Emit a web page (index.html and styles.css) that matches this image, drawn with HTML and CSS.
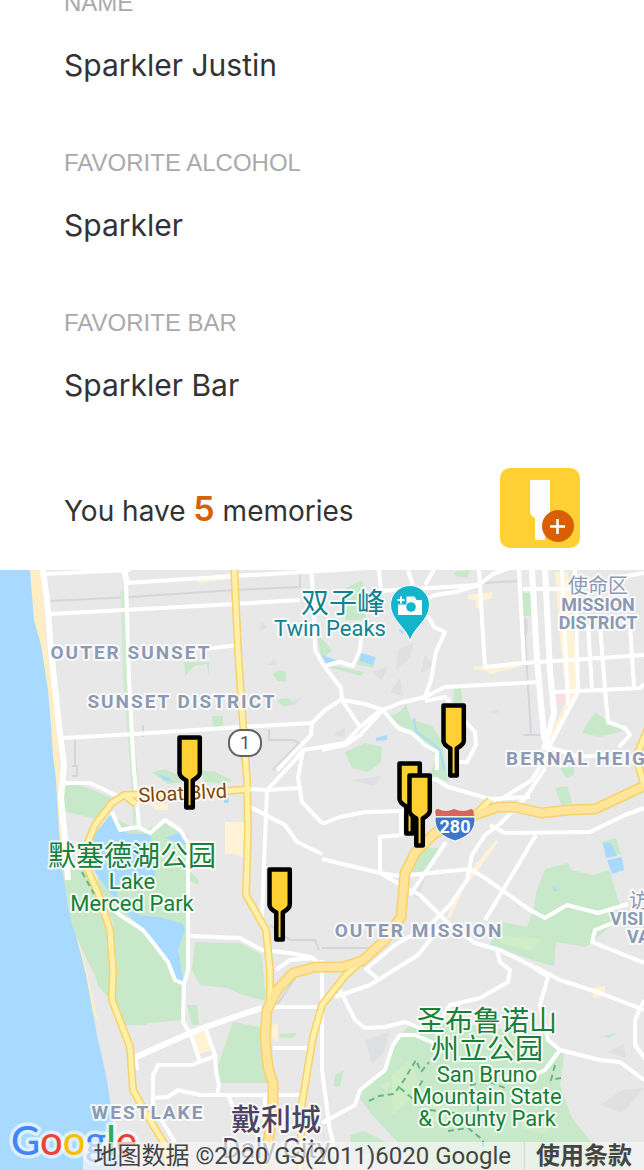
FILE: index.html
```html
<!DOCTYPE html>
<html lang="en">
<head>
<meta charset="utf-8">
<meta name="viewport" content="width=device-width, initial-scale=1">
<title>Profile</title>
<link rel="stylesheet" href="styles.css">
</head>
<body>
<main class="page">
  <section class="profile">
    <dl class="fields">
      <div class="field"><dt class="field-label">NAME</dt><dd class="field-value">Sparkler Justin</dd></div>
      <div class="field"><dt class="field-label">FAVORITE ALCOHOL</dt><dd class="field-value">Sparkler</dd></div>
      <div class="field"><dt class="field-label">FAVORITE BAR</dt><dd class="field-value">Sparkler Bar</dd></div>
    </dl>
    <div class="memories">
      <p class="memories-text">You have <strong class="memories-count">5</strong> memories</p>
      <button class="add-button" type="button" aria-label="Add memory">
        <svg viewBox="0 0 80 80" aria-hidden="true">
          <path d="M31 12H49Q50 12 50 13V44Q50 47 45 50V71Q45 72 44 72H36Q35 72 35 71V50Q30 47 30 44V13Q30 12 31 12Z" fill="#fcfcfc"/>
          <circle cx="58" cy="58" r="16" fill="#d95f02"/>
          <path d="M50 58.500H65M57.500 51V66" stroke="#fff" stroke-width="2.600"/>
        </svg>
      </button>
    </div>
  </section>

  <section class="map" aria-label="Map of memories">
    <svg class="map-canvas" viewBox="0 570 644 600" preserveAspectRatio="xMidYMid slice">
      <defs>
        <g id="bottle">
          <path d="M2.500 2.500H22.800V38Q22.500 41.500 15.800 45.500V72.500H9.300V45.500Q2.500 41.500 2.500 38Z" fill="#ffd034" stroke="#000" stroke-width="4.500" stroke-linejoin="round"/>
        </g>
      </defs>

      <rect class="land" y="570" width="644" height="600"/>

      <g class="shade">
        <path d="M398 650l16-8-4 16-14 12zM372 672l16-6-6 14zM425 655l8 10-12 8zM390 692l10-14 3 18zM333 735l12-8v10zM352 780l30-4-8 10zM490 712l8-3v4zM365 1040l24-8-5 20-12 12zM608 1052l16-8 2 14zM600 1105l22-15 22-2-22 25zM410 892l8-14 8-2-8 24z"/>
        <path d="M258 630l4-8 5 6zM268 665l6-6 3 6zM284 705l20-9-10 10z"/>
      </g>

      <path class="sand" d="M28 570H41L46 640 54 700 60 770 63 860 72 915 86 968 98 1020 90 1010 55 880 44 700Z"/>
      <path class="water" d="M0 570H30L34 620 41 645 48 690 51 725 53 755 56 780 59 830 63 870 68 905 76 935 86 975 97 1035 107 1080 113 1120 120 1170H0Z"/>

      <g class="park">
        <path d="M60 787L77 784 110 797 114 804 97 820 88 817 66 812Z"/>
        <path d="M62 870H85L98 893 112 928 114 970 108 997 98 986 95 975 82 950 72 925Z"/>
        <path d="M95 838L110 815 140 832 165 822 180 830 188 838V870L199 880 198 885 188 880V965L184 985V1020L147 1023 146 1025 124 1025 114 1000 114 925 98 885Z"/>
        <path d="M195 942L225 943 240 943 262 955 266 1001 240 994 228 988 200 985 192 970Z"/>
        <path d="M187 1005H197L199 1025H192Z"/>
        <path d="M233 1022L260 1027 264 1060 268 1083H220L218 1065Z"/>
        <path d="M151 772L165 769 180 776 182 782 168 784zM200 770L215 772 232 780 225 784 205 782Z"/>
        <path d="M184 662H209V676L207 664 194 666 185 676ZM212 716H223V727H213ZM273 674l6-4 7 2v10l-9-1zM276 700l12-2 6 5-10 4zM240 757h3v12z"/>
        <path d="M346 588L362 580 366 620 345 620ZM316 632L332 650 322 660ZM358 653L376 657 373 668 354 664ZM322 663l42 9-3 4-39-11zM345 752L365 743 382 747 381 762 368 772 352 768ZM454 688H461L463 706H453ZM521 593H531L531 616H522ZM453 572l17-2-3 8-11-2z"/>
        <path d="M388 716L400 712 406 704 411 719 432 726 442 742 448 782 430 775 436 757 422 741 408 731Z"/>
        <path d="M582 733L590 719 596 713 610 722 625 724 620 732 600 737Z"/>
        <path d="M560 768l14-1v8l-8 3zM555 788L567 786 572 803 562 806ZM420 848L439 848 425 872 411 872ZM601 842L616 838 621 854 609 856Z"/>
        <path d="M545 869L568 863 571 870 593 875 609 870 620 905 612 925 586 947 556 942 554 966 535 961 489 945 503 922 527 927 533 912 536 893 541 880Z"/>
        <path d="M397 1038L410 1025 450 1022 545 1035 564 1055 560 1085 572 1118 594 1145 625 1170H430L400 1145 372 1115 357 1095 385 1070Z"/>
        <path d="M350 1135l14-4 28 14 10 12-50-5zM335 1075l9-5-4 16-6 1zM602 1036l15-3-8 5zM280 1034l17-1-5 5-13-1z"/>
      </g>
      <g class="park-light">
        <path d="M500 935l40 4-8 12-32-8zM392 1075l18-15 12 30-30 25zM430 1100l30 10-5 18-25-8zM520 1110l30 12-5 12-22-5zM380 1085l10-4-3 12z"/>
      </g>

      <g class="water">
        <path d="M110 815L117 828 130 834 150 834 156 855 155 876 120 880 116 900 140 915 160 917 183 924 185 930 178 950 184 984 174 978 166 958 143 930 122 908 105 886 88 862 90 840ZM165 838L180 832 188 836V846Z"/>
        <path d="M158 774l12 4 2 4-8-2zM224 798h5v5h-5zM322 655L336 660 326 664ZM361 653L375 657 373 665 360 661ZM376 738L387 735V740L376 741ZM398 629l6 2-1 4zM603 843L611 843 617 856 606 858ZM607 860L622 857 624 870 612 874ZM552 885l6 5-3 2zM598 881l4 2z"/>
        <path class="stream" d="M414 718L416 732 430 741 440 750 444 770"/>
      </g>

      <g class="shop">
        <path d="M225 822H244V858L234 854 225 854ZM193 1033L207 1031 212 1050 199 1054ZM150 804h18v6h-12zM468 595l24-3v6l-10 3v8l-6-1v-8l-8-1zM473 667l45-6v6l-27 7-5-3-12-2zM197 578l40-6v6l-38 5zM593 988l12-2v10l-12 2zM272 1025l6-2v18l-6-2z"/>
        <path d="M555 572H568L573 630 580 690 552 745 550 735 567 700 560 640Z"/>
        <path d="M496 840L498 842 476 873 466 885 450 918 447 918 456 896 475 865Z"/>
      </g>
      <path class="hospital" d="M556 693H566V702L557 703Z"/>

      <g class="rail">
        <path d="M50 601L130 597 235 590 300 587V573M75 740V765M72 766h5v10h-5M273 770L300 742M269 729v11h25l5 3M482 583L520 581M524 620l3 50 4 65M523 735h17M322 948H378M143 725v12M270 925l20 15h25l4 10"/>
        <path d="M525 618q4 8-1 22M277 1005l20-30"/>
      </g>

      <g class="road-green"><path d="M124 590L127 690 134 770 137 828"/></g>

      <g class="road road-wide">
        <path d="M43 570L47 600 51 650 59 725 64 765 61 798 65 840 68 880"/>
        <path d="M532 570L537 660 544 737 549 750M545 570L550 670 554 713 544 750"/>
        <path d="M124 570L127 583"/>
      </g>
      <g class="road">
        <path d="M45 574L130 570M126 583L235 576 320 571 400 566M126 583L129 680 134 770 137 800 139 828M50 614L235 604 300 600M205 649L238 645M62 738L135 734 240 727 312 723 325 710 342 699"/>
        <path d="M62 783L90 783 105 790 120 797M247 789L268 790 298 788M267 789L262 917M312 723L311 735 277 770M268 789L295 760 303 750 322 747 345 743 360 727 383 708M303 750L298 778 302 802 322 823M250 807L285 825 297 842 322 854M322 824L340 817 365 812 404 811"/>
        <path d="M112 812L120 830 138 827 150 833 165 820 180 830 188 843V970L184 984 175 980 168 962 155 945 143 930 120 915 108 905M184 984L183 1022 191 1035 200 1062"/>
        <path d="M190 936L240 938 262 950 290 953 310 957 322 965M276 970L290 960 315 958"/>
        <path class="road-heavy" d="M134 1058L165 1044 200 1029 240 1015 262 1008M134 1055L136 1070"/>
        <path d="M206 1030L215 1055 216 1072 219 1085 217 1095M153 1098L168 1097 178 1090 200 1095H303M153 1110V1075L158 1065H192L215 1056M160 1118L175 1142M228 1095l5 12M273 1007H320M273 1048H310M265 1095v30M272 1070l-3 20M322 960V1070"/>
        <path d="M311 570L314 600 315 650 324 666M379 570L381 590M408 570L413 585M434 570L425 585M378 591L430 588 479 585 493 574 515 566M420 602L435 595 455 592 479 585"/>
        <path d="M428 616L434 627 445 632 436 652 431 680 425 697 400 703 383 710 365 704 342 700 341 688 324 666M324 666L340 662 353 666 360 650 362 628M342 700L360 727M322 750L345 745 360 735 383 710 398 728 412 733 425 745 437 752 437 770M425 697L445 687 539 682M425 701L445 697 450 702M464 720L475 732 476 745 467 762 450 762"/>
        <path d="M479 570L485 667 524 663 600 658 644 655M519 570L524 663M555 692L600 690 640 688 644 684M562 570L565 640 568 705M575 570L578 692M588 625L592 688M600 625L605 690 608 722 625 728 630 735 619 747M630 625L634 687M578 692L549 747 580 757 605 755M644 573l-35 6M523 589h58"/>
        <path d="M380 873V837L403 835M401 811V835M322 859L380 873 400 876 470 869 485 878 530 910 545 918 567 905 598 913 628 904M380 873L410 890 420 895 450 925 475 943 500 950 530 965 550 978M446 842L410 895M544 752V770L525 798 500 824M550 750L532 780 495 803 478 818M437 780L448 787 490 799 530 797M430 780l8-1M490 825L505 833 590 832 625 815 644 808M536 835L485 920M497 950L500 962 510 970 508 982 480 998 450 1005 440 1020"/>
        <path d="M500 824L485 835 472 855 467 880 450 905 430 925 395 945 365 970M442 925L418 955 370 985 335 997"/>
        <path d="M615 922L595 930 592 942 644 963M322 1000V1070L330 1130 340 1170M322 1123L355 1105 360 1090 385 1070 393 1045 400 1035 415 1035 450 1050M340 990L355 1020 365 1028 385 1027 405 1022 425 1030M365 968l12 10M535 967L560 980 600 993 644 1010M548 977L540 1005 548 1040 560 1050 600 1060 620 1062 644 1080M560 1050L545 1070 530 1077 500 1078M644 1000L635 1020V1045L648 1063"/>
      </g>

      <g class="highway-edge">
        <path d="M234 565L238 650 243 725 247 780 248 830 246 895 266 930 270 970V1010M251 789L200 793 124 795 112 803 95 825 88 842 87 868 98 893 110 930 113 970 112 1000 130 1047 133 1090 150 1120 165 1145 168 1175M124 795l12 9"/>
        <path d="M357 965L345 976 322 1005 313 1037 308 1067 302 1103 300 1175M648 728L636 757 644 785M490 800L475 815"/>
      </g>
      <g class="highway-edge highway-major">
        <path id="i280" d="M650 783L625 795 595 809 568 810 542 813 515 807 498 807 475 815 435 833 415 853 405 873 401 917 385 940 362 961 342 967 315 967 293 973 277 990 267 1010 265 1037 268 1067 273 1083V1103L270 1130 264 1170"/>
      </g>
      <g class="highway-fill">
        <path d="M234 565L238 650 243 725 247 780 248 830 246 895 266 930 270 970V1010M251 789L200 793 124 795 112 803 95 825 88 842 87 868 98 893 110 930 113 970 112 1000 130 1047 133 1090 150 1120 165 1145 168 1175M124 795l12 9"/>
        <path d="M357 965L345 976 322 1005 313 1037 308 1067 302 1103 300 1175M648 728L636 757 644 785M490 800L475 815"/>
        <use class="highway-major-fill" href="#i280"/>
      </g>
      <path class="trail" d="M82 872l12 22M369 1101l10-5 15-2 10-14 12-20 5 12 8-10M400 1088l12 10 12-20M555 1065l-4 15 10-2M448 1131l20-3 15 12v15M470 1085l20-3 15 6M478 1105v20M430 1110l25 3"/>

      <g class="label label-district">
        <text class="tracked" x="131" y="659">OUTER SUNSET</text>
        <text class="tracked" x="182" y="708">SUNSET DISTRICT</text>
        <text class="tracked from-start" x="506" y="765">BERNAL HEIG</text>
        <text class="tracked" x="419" y="937">OUTER MISSION</text>
        <text class="tracked" x="148" y="1119">WESTLAKE</text>
        <text class="cjk-small" x="598" y="593">使命区</text>
        <text x="598" y="611">MISSION</text>
        <text x="598" y="629">DISTRICT</text>
        <text class="cjk-small from-start" x="629" y="908">访</text>
        <text class="from-start" x="610" y="925">VISI</text>
        <text class="from-start" x="627" y="943">VA</text>
      </g>
      <g class="label label-park">
        <text class="cjk" x="132" y="866">默塞德湖公园</text>
        <text x="132" y="889">Lake</text>
        <text x="132" y="911">Merced Park</text>
        <text class="cjk" x="487" y="1031">圣布鲁诺山</text>
        <text class="cjk" x="487" y="1059">州立公园</text>
        <text x="487" y="1082">San Bruno</text>
        <text x="487" y="1104">Mountain State</text>
        <text x="487" y="1126">&amp; County Park</text>
      </g>
      <g class="label label-sight">
        <text class="cjk" x="343" y="613">双子峰</text>
        <text x="330" y="636">Twin Peaks</text>
      </g>
      <text class="label label-road" x="183" y="800" transform="rotate(-3 183 800)">Sloat Blvd</text>
      <g class="label label-city">
        <text class="cjk-city" x="276" y="1130">戴利城</text>
        <text x="276" y="1158">Daly City</text>
      </g>

      <path d="M410 641C406 627 390.500 620 390.500 605A19.500 19.500 0 0 1 429.500 605C429.500 620 414 627 410 641Z" fill="#12b5cb" stroke="#fff" stroke-width="1"/>
      <path fill="#fff" d="M406.500 596.500H414.500L416.500 600H422V615H398V604.500H406.500Z"/>
      <path fill="#fff" d="M400 596.500h2v2.500h2.500v2H402v2.500h-2V601h-2.500v-2h2.500z"/>
      <circle cx="411" cy="607" r="4.800" fill="#12b5cb"/>

      <rect x="229" y="730" width="32" height="26" rx="12" fill="#fff" stroke="#5f6368" stroke-width="2"/>
      <text class="shield-route" x="245" y="749">1</text>

      <path d="M436 816Q434 808 438 809 446 813 454 809 463 813 471 809 474 809 474 816Z" fill="#d9635d"/>
      <path d="M435 817H475C476 831 467 837 455 841 443 837 434 831 435 817Z" fill="#3b78c8" stroke="#fff" stroke-width="1"/>
      <text class="shield-interstate" x="455" y="833">280</text>

      <a href="#memory-1" aria-label="Memory 1"><use href="#bottle" x="177" y="735"/></a>
      <a href="#memory-2" aria-label="Memory 2"><use href="#bottle" x="441" y="703"/></a>
      <a href="#memory-3" aria-label="Memory 3"><use href="#bottle" x="397" y="761"/></a>
      <a href="#memory-4" aria-label="Memory 4"><use href="#bottle" x="407" y="773"/></a>
      <a href="#memory-5" aria-label="Memory 5"><use href="#bottle" x="267" y="867"/></a>

      <text class="brand" x="11" y="1155"><tspan fill="#4285f4">G</tspan><tspan fill="#ea4335">o</tspan><tspan fill="#fbbc05">o</tspan><tspan fill="#4285f4">g</tspan><tspan fill="#34a853">l</tspan><tspan fill="#ea4335">e</tspan></text>
    </svg>
    <footer class="attribution">
      <span>地图数据 ©2020 GS(2011)6020 Google</span>
      <a class="terms" href="#terms">使用条款</a>
    </footer>
  </section>
</main>
</body>
</html>
```
FILE: styles.css
```css
* { box-sizing: border-box; }

body {
  margin: 0;
  background: #fff;
  color: #333;
  font-family: Inter, "Noto Sans CJK SC", sans-serif;
}

.page {
  display: flex;
  flex-direction: column;
  min-height: 100vh;
  overflow: hidden;
}

.profile {
  margin-top: -12px;
  padding: 0 64px 22px;
}

.fields { margin: 0; }
.field { padding-bottom: 59px; }

.field-label {
  color: #aaa;
  font-family: "Liberation Sans", sans-serif;
  font-size: 24px;
  line-height: 30px;
}

.field-value {
  margin: 23px 0 0;
  font-size: 30px;
  line-height: 48px;
}

.memories {
  display: flex;
  align-items: center;
  justify-content: space-between;
}

.memories-text {
  margin: 0;
  padding-top: 4px;
  font-size: 28px;
  line-height: 40px;
}

.memories-count {
  color: #d95f02;
  font-size: 34px;
  font-weight: 600;
}

.add-button {
  width: 80px;
  height: 80px;
  padding: 0;
  border: 0;
  border-radius: 10px;
  background: #ffd034;
  cursor: pointer;
}

.add-button svg { display: block; }

.map {
  position: relative;
  flex: 1;
  overflow: hidden;
}

.map-canvas {
  display: block;
  width: 100%;
  height: 100%;
}

.land { fill: #e8e8e8; }
.shade { fill: #dcdddf; opacity: .7; }
.sand { fill: #ffeec4; }
.water { fill: #a8daff; }
.park { fill: #c8e9c9; }
.park-light { fill: #d3edc8; opacity: .8; }
.shop { fill: #fff2d5; }
.hospital { fill: #fbdedb; }
.stream { fill: none; stroke: #a8daff; stroke-width: 2; }
.rail { fill: none; stroke: #d3d6dc; stroke-width: 2; }
.road { fill: none; stroke: #fff; stroke-width: 4; stroke-linejoin: round; }
.road-wide { stroke-width: 6; }
.road-heavy { stroke-width: 6; }
.road-green { fill: none; stroke: #cfeace; stroke-width: 7; }

.highway-edge,
.highway-fill {
  fill: none;
  stroke: #f8d16b;
  stroke-width: 8;
  stroke-linejoin: round;
}
.highway-major { stroke-width: 11; }
.highway-fill { stroke: #fff0a8; stroke-width: 5; }
.highway-major-fill { stroke: #ffe59a; stroke-width: 8; }
.trail { fill: none; stroke: #68b887; stroke-width: 2; stroke-dasharray: 6 4; }

.label {
  font-family: Roboto, "Noto Sans CJK SC", sans-serif;
  font-size: 22px;
  text-anchor: middle;
  paint-order: stroke;
  stroke: #fff;
  stroke-opacity: .8;
  stroke-width: 4px;
  stroke-linejoin: round;
}
.label-district { fill: #8c99b3; font-size: 18px; font-weight: 700; }
.tracked { font-size: 19px; letter-spacing: 2px; }
.from-start { text-anchor: start; }
.cjk-small { font-size: 20px; font-weight: 400; }
.cjk { font-size: 28px; }
.cjk-city { font-size: 30px; font-weight: 500; }
.label-park { fill: #188038; }
.label-sight { fill: #0f8490; }
.label-road { fill: #80460b; font-size: 20px; }
.label-city { fill: #4d4464; font-size: 28px; }

.shield-route,
.shield-interstate {
  font-family: Roboto, sans-serif;
  font-size: 18px;
  text-anchor: middle;
  fill: #4d5156;
}
.shield-interstate { fill: #fff; font-weight: 700; }

.brand {
  font-family: Lato, sans-serif;
  font-size: 40px;
  font-weight: 500;
  paint-order: stroke;
  stroke: #fff;
  stroke-opacity: .6;
  stroke-width: 7px;
  stroke-linejoin: round;
}

.attribution {
  position: absolute;
  right: 0;
  bottom: 0;
  display: flex;
  gap: 13px;
  padding: 0 12px 0 10px;
  background: rgba(245, 245, 245, .7);
  color: #444;
  font-family: Roboto, "Noto Sans CJK SC", sans-serif;
  font-size: 24px;
  line-height: 28px;
  white-space: nowrap;
}

.terms {
  padding-left: 11px;
  border-left: 1px solid #d5ddd5;
  color: #444;
  font-weight: 700;
  text-decoration: none;
}
```
